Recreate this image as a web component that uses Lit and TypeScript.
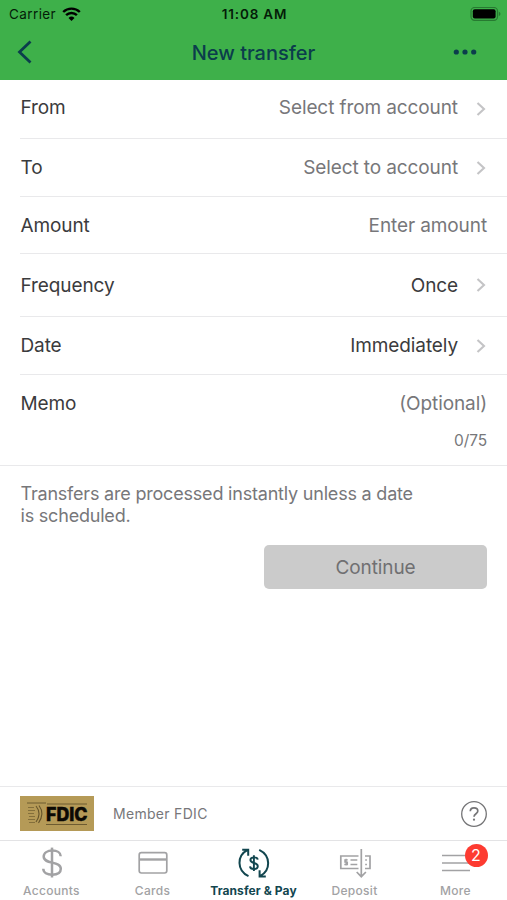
import { LitElement, html, svg, css } from "lit";
import { customElement } from "lit/decorators.js";

const chevron = html`<svg class="chev" width="10" height="16" viewBox="0 0 10 16">
  <path d="M1.5 2 L8 8 L1.5 14" fill="none" stroke="#c4c4c6" stroke-width="2.1" />
</svg>`;

const dollar = svg`<path d="M51.5 7.600V37.500" /><path d="M60.200 16.200C60.200 12.600 56.500 10.600 51.800 10.600C47 10.600 43.200 12.800 43.200 16.600C43.200 24.800 60.300 20.500 60.300 28.800C60.300 32.800 56.600 34.700 51.700 34.700C46.600 34.700 42.800 32.500 42.800 28.800" />`;

@customElement("status-bar")
export class StatusBar extends LitElement {
  static styles = css`
    :host { display: grid; grid-template-columns: 1fr auto 1fr; height: 28px; align-items: center; padding: 0 6px 0 9px; color: #041c08; }
    .left { display: flex; align-items: center; gap: 6px; font-size: 13.500px; letter-spacing: 0.4px; }
    .time { font-size: 13.500px; font-weight: 600; letter-spacing: 0.8px; margin-left: -1px; }
    .batt { justify-self: end; }
    svg { display: block; }
  `;
  render() {
    return html`<div class="left"><span>Carrier</span>
      <svg width="19" height="14" viewBox="0 0 19 14" fill="none" stroke="#000" stroke-width="2.400">
        <path d="M1.200 5A11.800 11.800 0 0 1 17.800 5" /><path d="M4.100 8.200A7.600 7.600 0 0 1 14.900 8.200" />
        <path d="M9.500 14L6.500 10.900A4.300 4.300 0 0 1 12.500 10.900Z" fill="#000" stroke="none" />
      </svg></div>
      <div class="time">11:08 AM</div>
      <svg class="batt" width="31" height="15" viewBox="0 0 31 15">
        <rect x="1" y="0.500" width="26.500" height="12.800" rx="3.600" fill="none" stroke="#277a31" stroke-width="1.200" />
        <rect x="2.800" y="2.200" width="22.800" height="9.400" rx="2" fill="#000" />
        <path d="M28.800 4.800Q30.500 5.300 30.500 6.900T28.800 9Z" fill="#277a31" />
      </svg>`;
  }
}

@customElement("transfer-form")
export class TransferForm extends LitElement {
  static styles = css`
    :host { display: block; color: #3b3b3d; font-size: 19px; letter-spacing: -0.1px; }
    .row { display: flex; align-items: center; box-sizing: border-box; margin-left: 20px; padding: 0 20px 0 0.500px; border-bottom: 1px solid #e9e9eb; }
    .r0 { height: 59px; padding-bottom: 4px; }
    .r1 { height: 58px; }
    .r2 { height: 57px; }
    .r3 { height: 63px; }
    .r4 { height: 58px; }
    .val { margin-left: auto; }
    .muted { color: #77777a; }
    .chev { margin-left: 18px; margin-right: 1px; }
    .r0 .chev { margin-top: 3px; }
    .memo { height: 91px; box-sizing: border-box; border-bottom: 1px solid #e9e9eb; padding: 16px 20px 0 20.500px; }
    .line { display: flex; justify-content: space-between; line-height: 25px; }
    .count { text-align: right; font-size: 15.500px; line-height: 20px; margin-top: 15px; color: #77777a; }
    .note { margin: 0; padding: 17px 20px 0 20.500px; font-size: 18px; letter-spacing: -0.200px; line-height: 21.500px; color: #77777a; }
    .btn { display: block; margin: 19px 20px 0 auto; width: 223px; height: 44px; border: 0; border-radius: 5px; background: #cbcbcb; color: #707072; font: inherit; letter-spacing: inherit; }
  `;
  rows = [
    ["From", "Select from account", true, true],
    ["To", "Select to account", true, true],
    ["Amount", "Enter amount", true, false],
    ["Frequency", "Once", false, true],
    ["Date", "Immediately", false, true],
  ];
  render() {
    return html`${this.rows.map(([label, value, muted, arrow], i) => html`<div class="row r${i}">
        <span>${label}</span><span class="val ${muted ? "muted" : ""}">${value}</span>${arrow ? chevron : ""}
      </div>`)}
      <div class="memo">
        <div class="line"><span>Memo</span><span class="muted">(Optional)</span></div>
        <div class="count">0/75</div>
      </div>
      <p class="note">Transfers are processed instantly unless a date<br />is scheduled.</p>
      <button class="btn">Continue</button>`;
  }
}

@customElement("fdic-bar")
export class FdicBar extends LitElement {
  static styles = css`
    :host { display: flex; align-items: center; box-sizing: border-box; height: 54px; border-top: 1px solid #e9e9eb; padding: 0 19px 0 20px; color: #77777a; font-size: 14px; }
    .member { margin-left: 19px; letter-spacing: 0.3px; }
    .help { margin-left: auto; }
    svg { display: block; }
  `;
  render() {
    return html`<svg width="74" height="35" viewBox="0 0 74 35">
        <rect width="74" height="35" fill="#b59a57" />
        <path d="M7 7H26M27 8H67M26 28.500H67" stroke="#5b4b27" stroke-width="0.800" />
        <path d="M8 11.500H14M8 14.500H15M8 17.500H14M9 20.500H15M8 23.500H15M9 26.500H15" stroke="#846f3b" stroke-width="1" />
        <path d="M16 10Q22 17.500 16 26M19 9.500Q25 17.500 18.500 27" fill="none" stroke="#66542b" stroke-width="1.100" />
        <text x="26" y="25.200" font-family="Inter, sans-serif" font-weight="800" font-size="18.800" textLength="41.500" lengthAdjust="spacingAndGlyphs" fill="#0b0904" stroke="#0b0904" stroke-width="0.500">FDIC</text>
      </svg>
      <span class="member">Member FDIC</span>
      <svg class="help" width="28" height="28" viewBox="0 0 28 28" fill="none" stroke="#747476">
        <circle cx="14" cy="14" r="12.300" stroke-width="1.300" />
        <path d="M10.300 11.300C10.300 8.900 11.900 7.900 14 7.900C16.200 7.900 17.800 9.100 17.800 11.100C17.800 13.800 14 13.700 14 16.800" stroke-width="1.700" />
        <circle cx="14" cy="19.700" r="1.100" fill="#747476" stroke="none" />
      </svg>`;
  }
}

@customElement("tab-bar")
export class TabBar extends LitElement {
  static styles = css`
    :host { display: grid; grid-template-columns: repeat(5, 1fr); box-sizing: border-box; height: 60px; border-top: 1px solid #e3e3e5; padding: 0 1px; color: #a2a2a4; font-size: 12px; font-weight: 500; letter-spacing: 0.3px; }
    .tab { display: flex; flex-direction: column; align-items: center; position: relative; white-space: nowrap; }
    .active { color: #12464f; font-weight: 700; letter-spacing: 0.1px; }
    svg { display: block; width: 50px; height: 42px; fill: none; stroke: currentColor; }
    .label { line-height: 16px; }
    .badge { position: absolute; left: 59.500px; top: 2.500px; width: 23px; height: 23px; border-radius: 50%; background: #fd3b31; color: #fff; font-size: 16px; font-weight: 400; letter-spacing: 0; line-height: 23px; text-align: center; }
  `;
  render() {
    return html`
      <div class="tab"><svg viewBox="26.500 1 50 42" stroke-width="2.500">${dollar}</svg><span class="label">Accounts</span></div>
      <div class="tab"><svg viewBox="0 0 50 42" stroke-width="1.700"><rect x="11.200" y="11.700" width="27.600" height="20.300" rx="2.200" /><path d="M11 18.500H39" stroke-width="2.400" /></svg><span class="label">Cards</span></div>
      <div class="tab active"><svg viewBox="0 0 50 42" stroke-width="2">
        <path d="M19.500 35.200C7.700 29.500 7.500 14.500 18.800 8.800M13.200 8.800H19.200V14.800" />
        <path d="M30.200 8.800C42 14.500 42 29.500 31 35.200M36.800 35.500H30.600V29.200" />
        <path d="M24.900 14.200V30M28.700 18.700C28.400 15.500 21.400 15.600 21.400 19C21.400 22.700 28.800 21.300 28.800 25.200C28.800 28.900 21.300 29 21 25.400" stroke-width="1.900" />
      </svg><span class="label">Transfer &amp; Pay</span></div>
      <div class="tab"><svg viewBox="0 0 50 42" stroke-width="1.700">
        <path d="M28.500 15H10.800V27.500H28.500M35 15H40V27.500H35" />
        <path d="M31.300 8V35.500M26.700 31L31.300 35.700L35.900 31" />
        <path d="M20.500 19H27.300M20.500 23.500H27.300M17.800 18.900H14.900V21.200H17.400V23.500H14.300M16.100 17.800V24.600" stroke-width="1.300" />
        <path d="M35.200 19H36.900M35.200 23.500H36.900" />
      </svg><span class="label">Deposit</span></div>
      <div class="tab"><svg viewBox="0 0 50 42" stroke-width="1.700"><path d="M11 14.500H39M11 22H39M11 29.500H39" /></svg><span class="label">More</span><span class="badge">2</span></div>`;
  }
}

@customElement("app-root")
export class AppRoot extends LitElement {
  static styles = css`
    :host { display: flex; flex-direction: column; width: 507px; height: 900px; overflow: hidden; background: #fff; font-family: Inter, "Liberation Sans", sans-serif; }
    .head { background: #3eb04a; height: 80px; }
    .nav { display: grid; grid-template-columns: 60px 1fr 60px; align-items: center; height: 49px; color: #0b3d4c; }
    .back { margin-left: 16px; margin-top: -1px; }
    .title { text-align: center; font-size: 20px; font-weight: 500; }
    .dots { margin-left: 5px; margin-top: -1px; }
    .body { flex: 1; }
    svg { display: block; }
  `;
  render() {
    return html`<header class="head">
        <status-bar></status-bar>
        <div class="nav">
          <svg class="back" width="18" height="26" viewBox="0 0 18 26"><path d="M14.500 2.500L3.500 13L14.500 23.500" fill="none" stroke="currentColor" stroke-width="2.800" /></svg>
          <div class="title">New transfer</div>
          <svg class="dots" width="26" height="8" viewBox="0 0 26 8" fill="currentColor"><circle cx="4.300" cy="4" r="2.600" /><circle cx="13" cy="4" r="2.600" /><circle cx="21.700" cy="4" r="2.600" /></svg>
        </div>
      </header>
      <transfer-form class="body"></transfer-form>
      <fdic-bar></fdic-bar>
      <tab-bar></tab-bar>`;
  }
}
